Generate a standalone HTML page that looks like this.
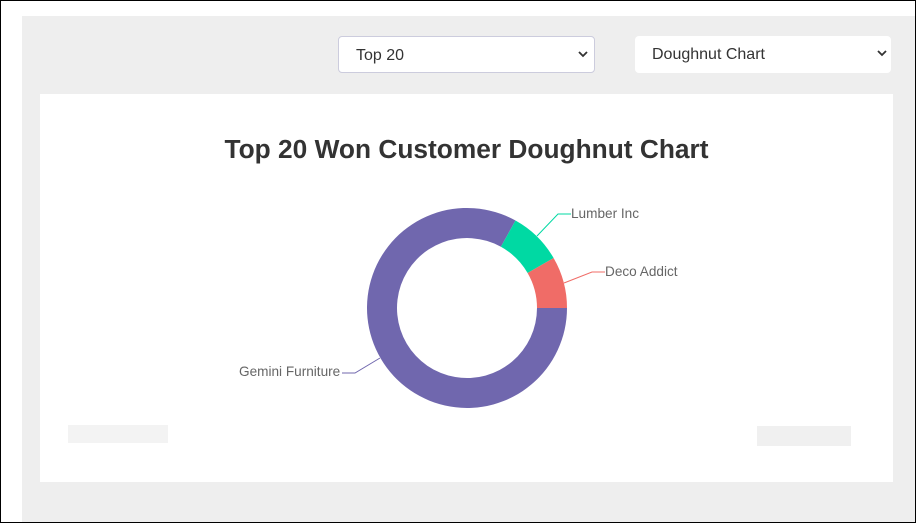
<!DOCTYPE html>
<html><head><style>
html,body{margin:0;padding:0;width:916px;height:523px;overflow:hidden;background:#fff;font-family:"Liberation Sans",sans-serif}
.frame{position:absolute;left:0;top:0;width:914px;height:521px;border:1px solid #000;z-index:5}
.gray{position:absolute;left:22px;top:16px;width:894px;height:507px;background:#eeeeee}
.sel{position:absolute;top:36px;height:37px;background:#fff;border-radius:4px;box-sizing:border-box;font-size:16px;color:#333;line-height:37px;padding-left:17px}
.panel{position:absolute;left:40px;top:94px;width:853px;height:388px;background:#fff}
h1{position:absolute;left:0;width:853px;top:134px;margin:0;text-align:center;font-size:26.3px;font-weight:bold;color:#333}
.lbl{position:absolute;font-size:13.6px;color:#666}
</style></head><body>
<div class="gray"></div>
<div class="sel" style="left:338px;width:257px;border:1px solid #ccd">Top 20<svg style="position:absolute;right:6px;top:14px" width="10" height="8"><path d="M1 1L5 5L9 1" fill="none" stroke="#333" stroke-width="1.8"/></svg></div>
<div class="sel" style="left:635px;width:256px">Doughnut Chart<svg style="position:absolute;right:4px;top:14px" width="10" height="8"><path d="M1 1L5 5L9 1" fill="none" stroke="#333" stroke-width="1.8"/></svg></div>
<div class="panel"></div>
<h1 style="left:40px">Top 20 Won Customer Doughnut Chart</h1>
<svg style="position:absolute;left:0;top:0" width="916" height="523">
<path d="M567 308 A100 100 0 1 1 515.5 220.5 L500.9 246.8 A70 70 0 1 0 537 308 Z" fill="#7067ae"/>
<path d="M515.5 220.5 A100 100 0 0 1 553.6 258 L527.6 273 A70 70 0 0 0 500.9 246.8 Z" fill="#00d9a3"/>
<path d="M553.6 258 A100 100 0 0 1 567 308 L537 308 A70 70 0 0 0 527.6 273 Z" fill="#f06c67"/>
<polyline points="537,236 558,214 571,214" fill="none" stroke="#00d9a3" stroke-width="1"/>
<polyline points="564,283 592,272 605,272" fill="none" stroke="#f06c67" stroke-width="1"/>
<polyline points="380,358 355,373 342,373" fill="none" stroke="#7067ae" stroke-width="1"/>
<rect x="68" y="425" width="100" height="18" fill="#f3f3f3"/>
<rect x="757" y="426" width="94" height="20" fill="#f0f0f0"/>
</svg>
<div class="lbl" style="left:571px;top:206px">Lumber Inc</div>
<div class="lbl" style="left:605px;top:264px">Deco Addict</div>
<div class="lbl" style="left:239px;top:364px">Gemini Furniture</div>
<div class="frame"></div>
</body></html>
